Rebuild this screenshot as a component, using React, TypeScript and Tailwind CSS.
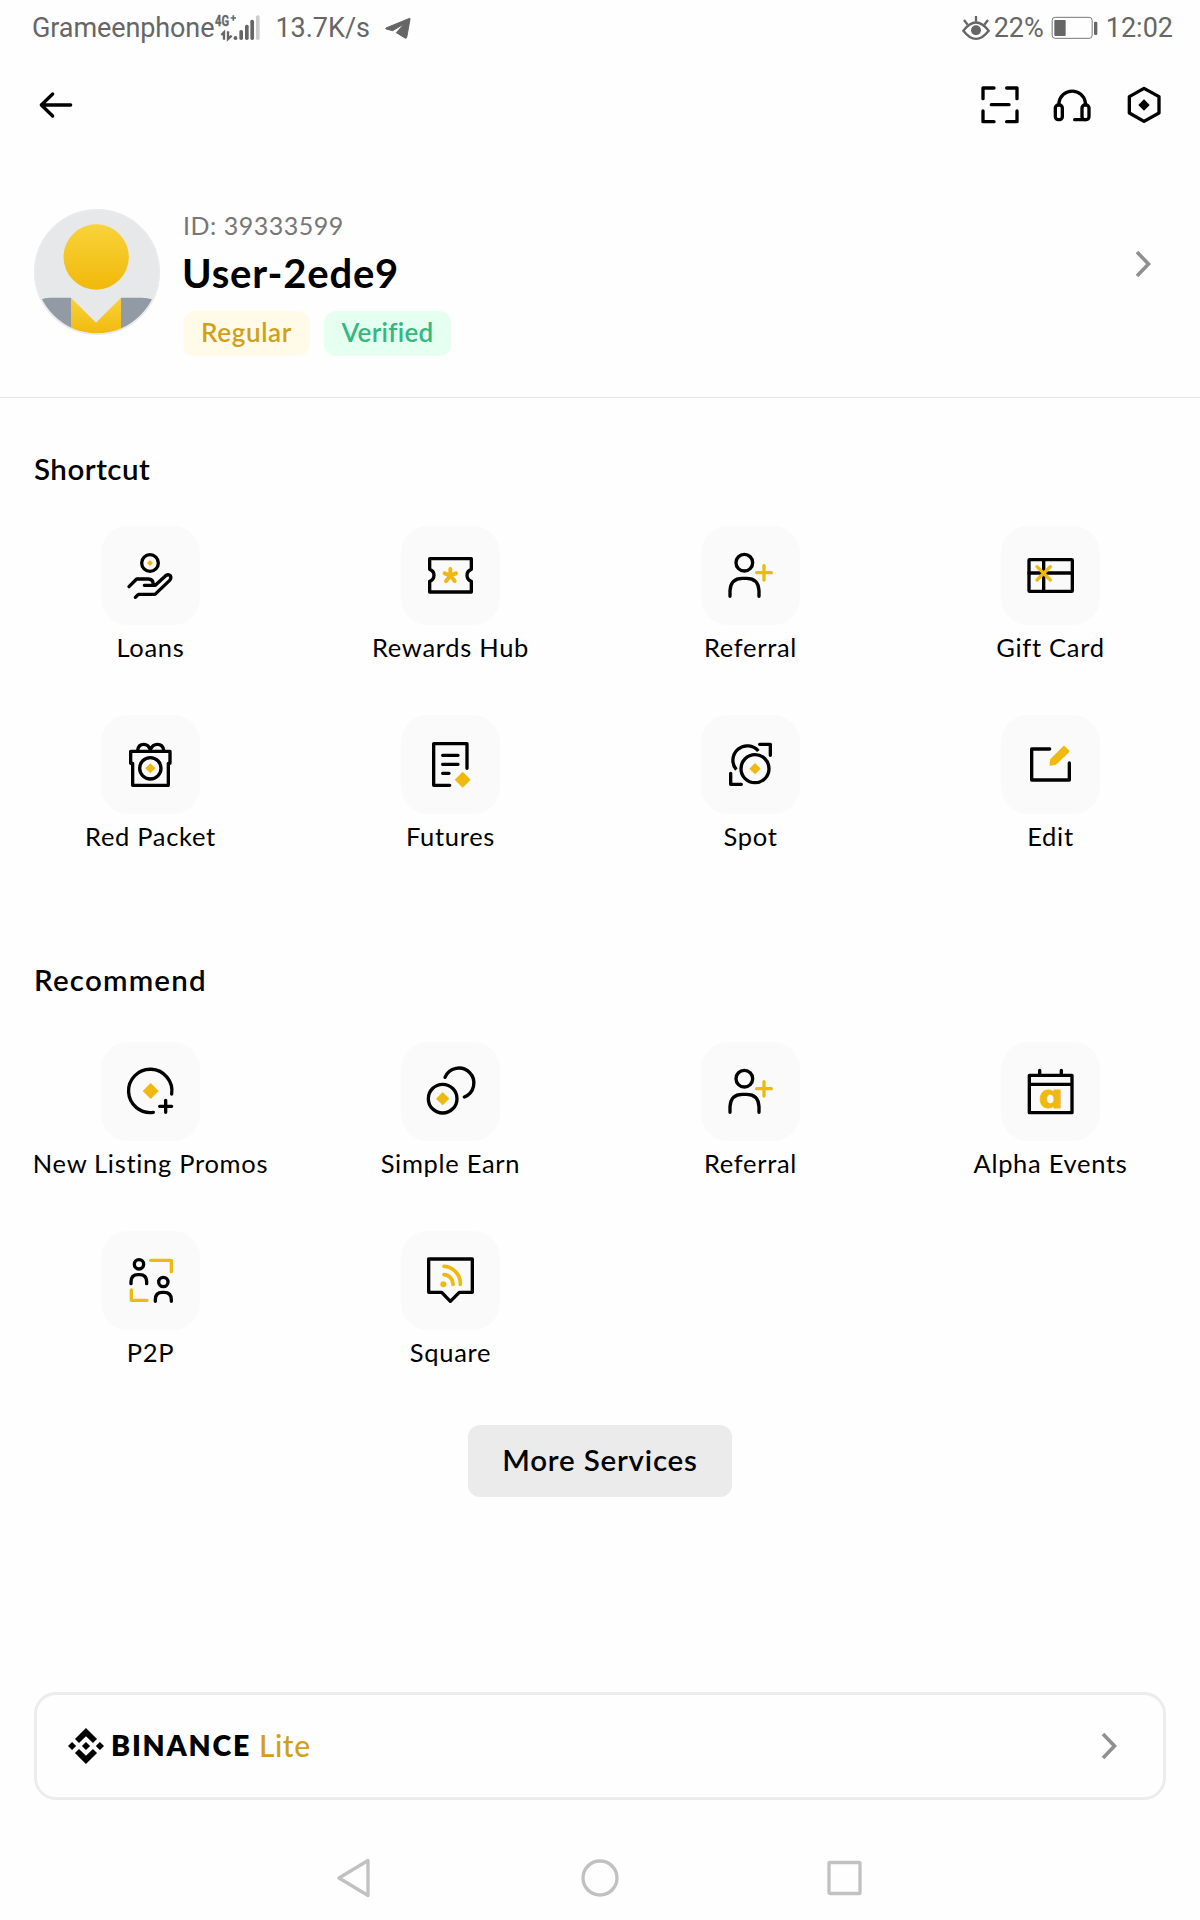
import type { ReactNode } from "react";
import { SiBinance } from "react-icons/si";

const GOLD = "#efb90f";

/* Service icons share a 297-unit canvas, three units per pixel of the 99px tile. */
function Tile({ children }: { children: ReactNode }) {
  return (
    <div className="size-[99px] rounded-[27px] bg-[#fafafa]">
      <svg
        viewBox="0 0 297 297"
        className="size-full"
        fill="none"
        stroke="#000"
        strokeWidth="10"
        strokeLinecap="round"
        strokeLinejoin="round"
      >
        {children}
      </svg>
    </div>
  );
}

function Diamond({ x, y, r }: { x: number; y: number; r: number }) {
  return <path d={`M${x} ${y - r}L${x + r} ${y}L${x} ${y + r}L${x - r} ${y}Z`} fill={GOLD} stroke="none" />;
}

const loans = (
  <>
    <circle cx="147" cy="111" r="25" />
    <Diamond x={147} y={111} r={9} />
    <path d="M84 182L107 159H141Q157 159 157 176M130 178H163L194 149Q202 143 208 149Q212 156 206 163L162 205H112L103 214" />
  </>
);
const rewards = (
  <>
    <path d="M86 98H211V130A19 19 0 0 0 211 166V198H86V166A19 19 0 0 0 86 130Z" />
    <path d="M148 129V149M148 149L131 142M148 149L165 142M148 149L135 165M148 149L161 165" stroke={GOLD} strokeWidth="12" />
  </>
);
const referral = (
  <>
    <circle cx="130" cy="110" r="25" />
    <path d="M87 211V194Q89 157 124 157H137Q172 157 174 194V211" />
    <path d="M167 140H211M189 119V162" stroke={GOLD} />
  </>
);
const giftCard = (
  <>
    <rect x="84" y="101" width="130" height="95" rx="2" />
    <path d="M84 141H214M128 101V196" />
    <path d="M108 122L148 162M148 122L108 162" stroke={GOLD} />
  </>
);
const redPacket = (
  <>
    <path d="M95 145H89V109H207V145H202V211H95Z" />
    <path d="M110 106Q112 88 128 88Q142 88 148 104Q155 88 169 88Q186 88 188 106" />
    <circle cx="148" cy="160" r="32" />
    <Diamond x={148} y={160} r={15} />
  </>
);
const futures = (
  <>
    <path d="M198 160V86H98V211H146M125 121H171M125 148H171M125 175H144" />
    <Diamond x={185} y={194} r={24} />
  </>
);
const spot = (
  <>
    <circle cx="162" cy="161" r="42" />
    <Diamond x={162} y={161} r={17} />
    <path d="M172 108A43 43 0 1 0 106 164" strokeLinecap="butt" />
    <path d="M176 88H208V121M89 175V208H121" />
  </>
);
const edit = (
  <>
    <path d="M146 102H92V195H205V144" />
    <path d="M189 95L203 109L164 147L148 150L150 134Z" fill={GOLD} stroke={GOLD} strokeWidth="5" />
  </>
);
const listing = (
  <>
    <path d="M157 211A65 65 0 1 1 212 156M176 193H212M194 175V211" />
    <Diamond x={149} y={147} r={24} />
  </>
);
const earn = (
  <>
    <circle cx="125" cy="170" r="43" />
    <Diamond x={125} y={170} r={20} />
    <path d="M132 106A45 45 0 1 1 190 165" />
  </>
);
const alpha = (
  <>
    <path d="M85 100H213V212H85ZM85 127H213M116 85V100M181 85V100" />
    <text
      x="114"
      y="197"
      fontSize="94"
      fontWeight="700"
      textLength="72"
      lengthAdjust="spacingAndGlyphs"
      fill={GOLD}
      stroke={GOLD}
      strokeWidth="3"
      className="font-['DejaVu_Sans',sans-serif]"
    >
      ɑ
    </text>
  </>
);
const p2p = (
  <>
    <circle cx="114" cy="100" r="14" />
    <path d="M90 158V153Q90 131 111 131H116Q137 131 137 153V158" />
    <circle cx="187" cy="153" r="14" />
    <path d="M163 211V206Q163 184 184 184H189Q211 184 211 206V211" />
    <path d="M149 88H211V122M91 177V208H138" stroke={GOLD} />
  </>
);
const square = (
  <>
    <path d="M83 84H214V184H175L148 211L122 184H83Z" />
    <path d="M129 131A28 28 0 0 1 156 160M129 106A52 52 0 0 1 178 160" stroke={GOLD} strokeWidth="11" />
    <circle cx="127" cy="160" r="9" fill={GOLD} stroke="none" />
  </>
);

type Service = { label: string; icon: ReactNode };

const shortcuts: Service[] = [
  { label: "Loans", icon: loans },
  { label: "Rewards Hub", icon: rewards },
  { label: "Referral", icon: referral },
  { label: "Gift Card", icon: giftCard },
  { label: "Red Packet", icon: redPacket },
  { label: "Futures", icon: futures },
  { label: "Spot", icon: spot },
  { label: "Edit", icon: edit },
];

const recommended: Service[] = [
  { label: "New Listing Promos", icon: listing },
  { label: "Simple Earn", icon: earn },
  { label: "Referral", icon: referral },
  { label: "Alpha Events", icon: alpha },
  { label: "P2P", icon: p2p },
  { label: "Square", icon: square },
];

function ServiceGrid({ items }: { items: Service[] }) {
  return (
    <div className="grid grid-cols-4 gap-y-[52px]">
      {items.map((s) => (
        <div key={s.label} className="flex flex-col items-center gap-1.5">
          <Tile>{s.icon}</Tile>
          <span className="pl-px text-[25.5px] leading-8 tracking-[0.7px] whitespace-nowrap">{s.label}</span>
        </div>
      ))}
    </div>
  );
}

function StatusBar() {
  return (
    <div className="flex h-[55px] items-center justify-between pr-[27px] pl-8 font-[Roboto,sans-serif] text-[27px] text-[#666]">
      <div className="flex items-center">
        <span className="pt-0.5 tracking-[-0.1px]">Grameenphone</span>
        <svg viewBox="648 40 144 84" className="h-7 w-12" fill="#666">
          <text
            x="651"
            y="77"
            fontSize="42"
            fontWeight="700"
            textLength="42"
            lengthAdjust="spacingAndGlyphs"
            stroke="#666"
            strokeWidth="1"
          >
            4G
          </text>
          <path d="M698 52H714M706 44V60" stroke="#666" strokeWidth="5" />
          <path d="M678 117V95L670 103M690 92V115L701 105" fill="none" stroke="#666" strokeWidth="7" />
          <rect x="707" y="106" width="11" height="12" rx="5" />
          <rect x="724" y="88" width="11" height="30" rx="5" />
          <rect x="741" y="72" width="11" height="46" rx="5" />
          <rect x="757" y="57" width="11" height="61" rx="5" />
          <rect x="774" y="44" width="11" height="74" rx="5" fill="#ccc" />
        </svg>
        <span className="ml-[13px] pt-0.5">13.7K/s</span>
        <svg viewBox="1156 50 84 72" className="ml-3.5 h-6 w-7" fill="#666">
          <path
            d="M1162 86L1233 57Q1235 57 1234 60L1224 115Q1222 118 1219 116L1193 100L1217 73L1182 94L1162 89Q1160 88 1162 86Z"
            stroke="#666"
            strokeWidth="3"
            strokeLinejoin="round"
          />
        </svg>
      </div>
      <div className="flex items-center">
        <svg viewBox="69 42 84 78" className="mr-1 h-[26px] w-7" fill="none" stroke="#666" strokeWidth="7">
          <path d="M73 89Q111 40 149 89Q111 138 73 89Z" />
          <circle cx="111" cy="88" r="15" fill="#666" stroke="none" />
          <path d="M111 45V62M75 57L86 71M147 57L136 71" />
        </svg>
        <span className="pt-0.5">22%</span>
        <svg viewBox="334 45 144 72" className="ml-[7px] h-6 w-12" fill="#666">
          <rect x="337.5" y="49" width="120" height="63" rx="9" fill="none" stroke="#777" strokeWidth="3" />
          <rect x="344" y="57" width="34" height="48" rx="3" />
          <rect x="463" y="62" width="10" height="40" rx="4" />
        </svg>
        <span className="ml-[7px] pt-0.5">12:02</span>
      </div>
    </div>
  );
}

function Header() {
  return (
    <header className="flex h-[99px] items-center justify-between pr-9 pl-9">
      <svg
        viewBox="108 255 120 120"
        className="size-10"
        fill="none"
        stroke="#000"
        strokeWidth="10"
        strokeLinecap="round"
        strokeLinejoin="round"
      >
        <path d="M158 282L124 315L158 348M124 315H212" />
      </svg>
      <div className="flex gap-8">
        <svg
          viewBox="118 254 120 120"
          className="size-10"
          fill="none"
          stroke="#000"
          strokeWidth="10"
          strokeLinecap="round"
          strokeLinejoin="round"
        >
          <path d="M127 295V263H160M198 263H229V295M229 332V364H198M160 364H127V332M152 313H205" />
        </svg>
        <svg
          viewBox="334 254 120 120"
          className="size-10"
          fill="none"
          stroke="#000"
          strokeWidth="10"
          strokeLinecap="round"
          strokeLinejoin="round"
        >
          <path d="M355 312V306A40 40 0 0 1 434 306V312" />
          <rect x="344" y="314" width="21" height="44" rx="9" />
          <rect x="424" y="314" width="21" height="44" rx="9" />
          <path d="M434 358H402" />
        </svg>
        <svg viewBox="550 254 120 120" className="size-10" fill="none" stroke="#000" strokeWidth="10" strokeLinejoin="round">
          <path d="M610 264L655 289V338L610 363L566 338V289Z" />
          <path d="M610 297L627 314L610 331L593 314Z" fill="#000" stroke="none" />
        </svg>
      </div>
    </header>
  );
}

function Chevron() {
  return (
    <svg viewBox="0 0 20 30" className="h-[30px] w-5" fill="none" stroke="#909090" strokeWidth="3.6">
      <path d="M4 3L15.500 15L4 27" />
    </svg>
  );
}

function Avatar() {
  return (
    <svg viewBox="102 57 378 378" className="size-[126px]">
      <defs>
        <linearGradient id="head" x1="0" y1="0" x2="0" y2="1">
          <stop offset="0" stopColor="#f8d33a" />
          <stop offset="1" stopColor="#f0b90b" />
        </linearGradient>
        <clipPath id="disc">
          <circle cx="291" cy="246" r="186" />
        </clipPath>
      </defs>
      <circle cx="291" cy="246" r="189" fill="#e9eaeb" />
      <g clipPath="url(#disc)">
        <rect x="102" y="57" width="378" height="378" fill="#e6e8ea" />
        <path d="M120 329Q135 323 150 323H213V435H102V330Z" fill="#929aa5" />
        <path d="M462 329Q440 323 425 323H363V435H480V330Z" fill="#929aa5" />
        <path d="M213 323L288 398L363 323V435H213Z" fill="url(#head)" />
      </g>
      <circle cx="288.500" cy="201" r="98" fill="url(#head)" />
      <circle cx="291" cy="246" r="186" fill="none" stroke="#e9eaeb" strokeWidth="5" />
    </svg>
  );
}

function Profile() {
  return (
    <section className="flex h-[244px] items-start border-b border-[#e6e6e6] pt-[55px] pr-[47px] pl-[34px]">
      <Avatar />
      <div className="ml-[22px] flex-1">
        <p className="pl-px text-[25px] leading-8 tracking-[0.5px] text-[#777]">ID: 39333599</p>
        <h1 className="mt-2 text-[40px] leading-[48px] font-bold tracking-[0.8px]">User-2ede9</h1>
        <div className="mt-3.5 ml-px flex gap-3.5">
          <span className="flex h-[45px] w-[127px] items-center justify-center rounded-xl bg-[#fffbe8] pb-0.5 text-[26px] font-semibold tracking-[0.6px] text-[#d0a01a]">
            Regular
          </span>
          <span className="flex h-[45px] w-[127px] items-center justify-center rounded-xl bg-[#e5fff1] pb-0.5 text-[26px] font-semibold tracking-[0.3px] text-[#35b780]">
            Verified
          </span>
        </div>
      </div>
      <div className="mt-10">
        <Chevron />
      </div>
    </section>
  );
}

function SystemNav() {
  return (
    <nav className="mt-[58px] flex h-10 items-center justify-between px-[333px]">
      <svg viewBox="0 0 40 40" className="size-10" fill="none" stroke="#c1c1c1" strokeWidth="3.3" strokeLinejoin="round">
        <path d="M6 20L35 2.500V37.500Z" />
      </svg>
      <svg viewBox="0 0 40 40" className="size-10" fill="none" stroke="#c1c1c1" strokeWidth="3.3">
        <circle cx="20" cy="20" r="17" />
      </svg>
      <svg viewBox="0 0 40 40" className="size-10" fill="none" stroke="#c1c1c1" strokeWidth="3.3">
        <rect x="2" y="4.500" width="31" height="31" rx="1" />
      </svg>
    </nav>
  );
}

export default function App() {
  return (
    <div className="h-[1920px] w-[1200px] overflow-hidden bg-[#fefefe] font-[Lato,sans-serif] text-black">
      <StatusBar />
      <Header />
      <Profile />
      <h2 className="mt-[51px] mb-[37px] pl-[34px] text-[29.5px] leading-10 font-semibold tracking-[0.5px]">Shortcut</h2>
      <ServiceGrid items={shortcuts} />
      <h2 className="mt-[108px] mb-[42px] pl-[34px] text-[29.5px] leading-10 font-semibold tracking-[1.2px]">Recommend</h2>
      <ServiceGrid items={recommended} />
      <button className="mx-auto mt-[57px] flex h-[72px] w-[264px] items-center justify-center rounded-xl bg-[#ebebeb] pb-0.5 text-[29.5px] font-semibold tracking-[0.8px]">
        More Services
      </button>
      <div className="mt-[195px] mr-[34px] ml-[34px] flex h-[108px] items-center rounded-[22px] border-[3px] border-[#ececec] pr-11 pl-[31px]">
        <SiBinance className="size-[36px]" />
        <span className="ml-[7px] pb-0.5 text-[28.500px] font-extrabold tracking-[1.8px]">BINANCE</span>
        <span className="ml-2 flex-1 pb-0.5 text-[30px] font-medium tracking-[0.5px] text-[#d0a01a]">Lite</span>
        <Chevron />
      </div>
      <SystemNav />
    </div>
  );
}
